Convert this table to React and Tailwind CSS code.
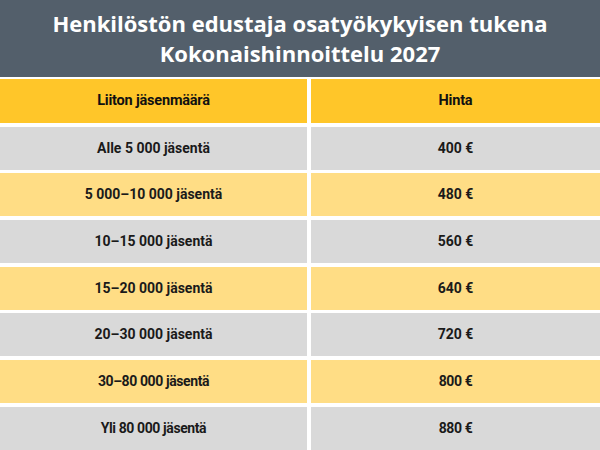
const rows = [
  { n: "Alle 5 000 jäsentä", p: "400 €", bg: "bg-[#d9d9d9]", c: false },
  { n: "5 000–10 000 jäsentä", p: "480 €", bg: "bg-[#ffdd85]", c: false },
  { n: "10–15 000 jäsentä", p: "560 €", bg: "bg-[#d9d9d9]", c: false },
  { n: "15–20 000 jäsentä", p: "640 €", bg: "bg-[#ffdd85]", c: false },
  { n: "20–30 000 jäsentä", p: "720 €", bg: "bg-[#d9d9d9]", c: false },
  { n: "30–80 000 jäsentä", p: "800 €", bg: "bg-[#ffdd85]", c: true },
  { n: "Yli 80 000 jäsentä", p: "880 €", bg: "bg-[#d9d9d9]", c: true },
];

const wide = "font-['Roboto',sans-serif] font-bold text-[14px] text-[#1a1a1a]";
const narrow = "font-['Roboto',sans-serif] font-bold text-[14px] tracking-[-0.4px] text-[#1a1a1a]";
const head = "font-['Roboto',sans-serif] font-bold text-[14.5px] tracking-[-0.2px] text-[#111]";

export default function App() {
  return (
    <div className="w-[600px] h-[450px] overflow-hidden bg-white flex flex-col">
      <div className="h-[77px] bg-[#535f6b] flex flex-col items-center justify-center text-white font-['Open_Sans',sans-serif] font-bold text-[22px] leading-[30px] pb-[2px]">
        <div>Henkilöstön edustaja osatyökykyisen tukena</div>
        <div>Kokonaishinnoittelu 2027</div>
      </div>
      <div className="mt-[2px] flex flex-col gap-[3.5px]">
        <div className="h-[44px] flex gap-[4px]">
          <div className={"w-[307px] bg-[#ffc629] flex items-center justify-center " + head}>Liiton jäsenmäärä</div>
          <div className={"flex-1 bg-[#ffc629] flex items-center justify-center " + head}>Hinta</div>
        </div>
        {rows.map((r) => (
          <div key={r.n} className="h-[43.2px] flex gap-[4px]">
            <div className={"w-[307px] flex items-center justify-center " + r.bg + " " + (r.c ? narrow : wide)}>{r.n}</div>
            <div className={"flex-1 flex items-center justify-center " + r.bg + " " + (r.c ? narrow : wide)}>{r.p}</div>
          </div>
        ))}
      </div>
    </div>
  );
}
